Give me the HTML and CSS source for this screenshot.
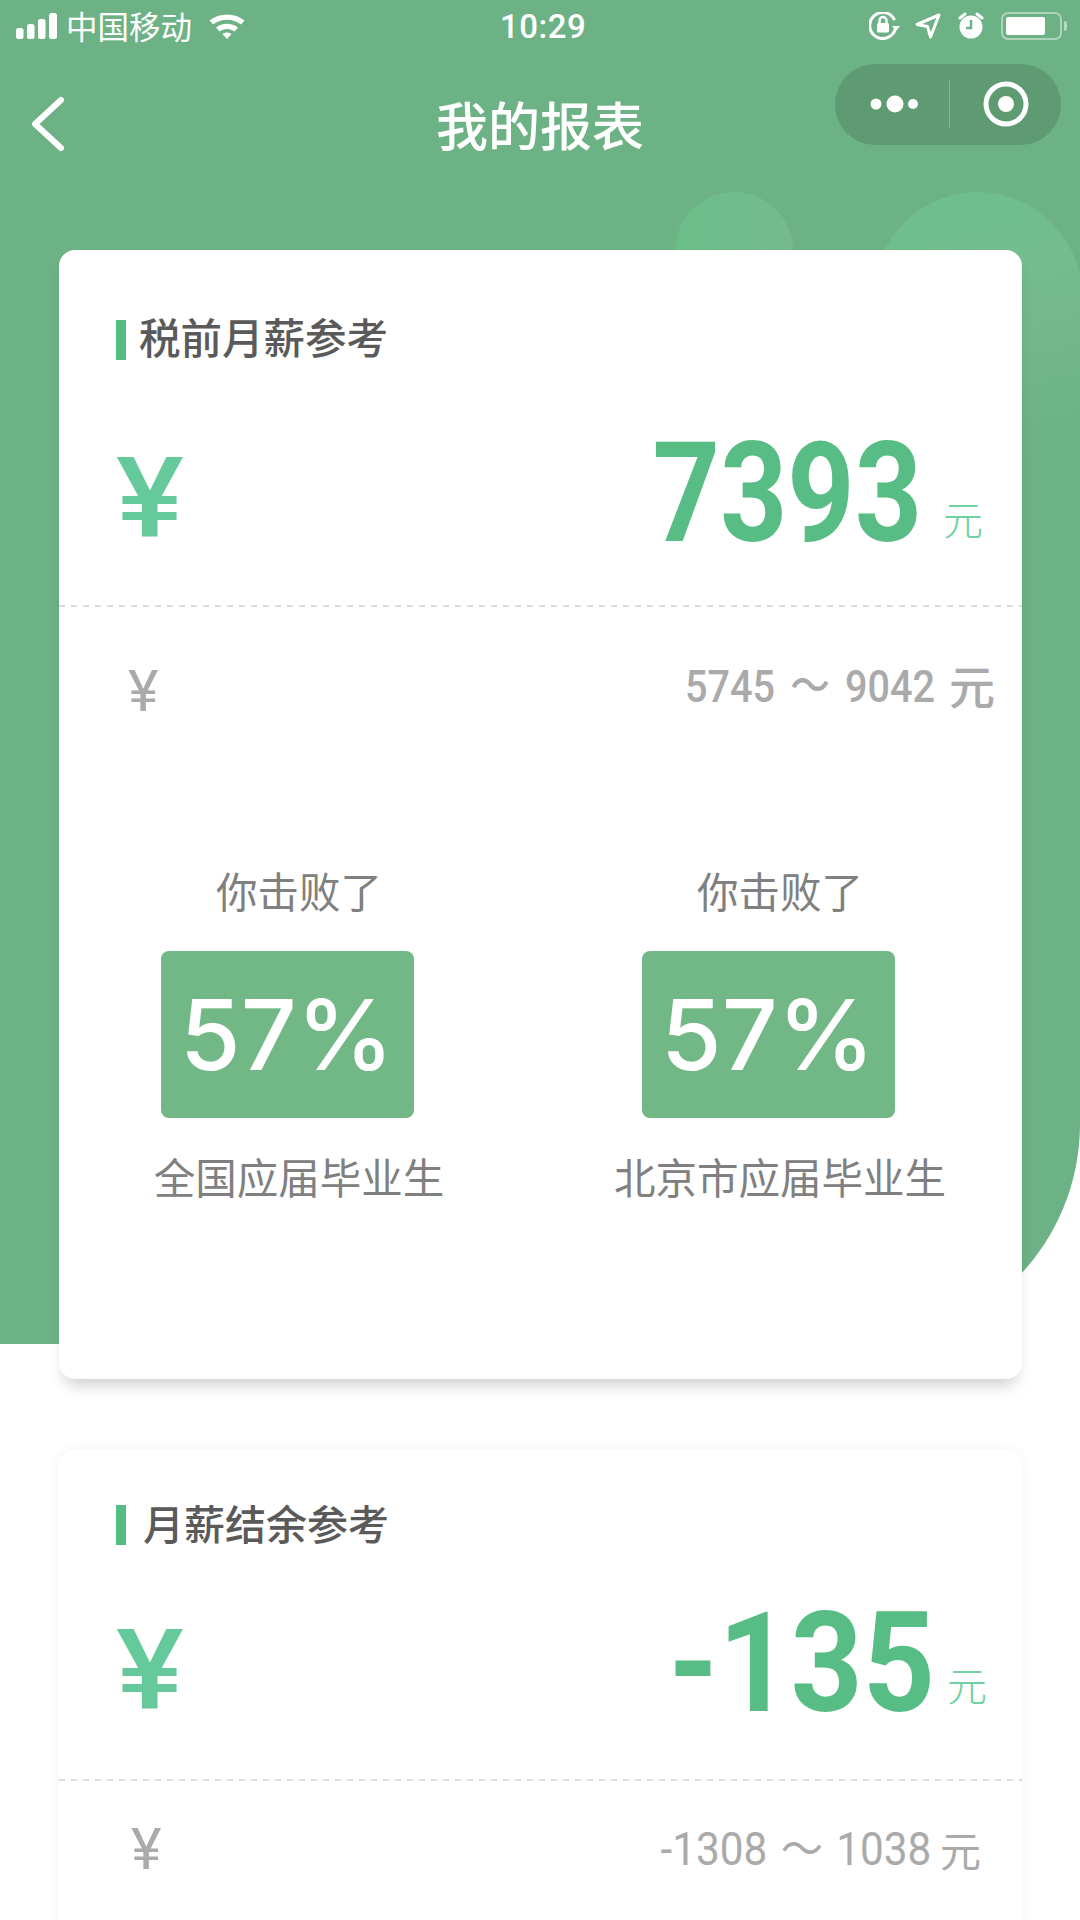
FILE: index.html
```html
<!DOCTYPE html>
<html lang="zh">
<head>
<meta charset="utf-8">
<title>我的报表</title>
<link rel="stylesheet" href="styles.css">
</head>
<body>
<div class="page">
  <div class="hero">
    <div class="blob blob-small"></div>
    <div class="blob blob-large"></div>
  </div>

  <header class="status">
    <div class="status-left">
      <svg class="signal" width="42" height="28" viewBox="0 0 42 28"><rect x="0" y="15" width="7.5" height="11" rx="2.5"/><rect x="11" y="11" width="7.5" height="15" rx="2.5"/><rect x="22" y="6" width="7.5" height="20" rx="2.5"/><rect x="33" y="0" width="8" height="26" rx="2.5"/></svg>
      <span class="carrier">中国移动</span>
      <svg class="wifi" width="38" height="28" viewBox="0 0 38 28"><path d="M1.5 8.5C11 .5 27 .5 36.5 8.5l-3.500 4C25 6 13 6 5 12.5Z"/><path d="M8 15.500c6.500-5 15.500-5 22 0l-3.500 4c-4.500-3.500-10.500-3.500-15 0Z"/><path d="M14.500 22c2.700-2 6.300-2 9 0L19 27Z"/></svg>
    </div>
    <div class="clock">10:29</div>
    <div class="status-right">
      <svg class="st-icon st-lock" width="32" height="28" viewBox="0 0 32 28"><path class="line" d="M26.500 16A13 13 0 1 1 25 7"/><path class="solid" d="M23 14h8l-4 5Z"/><rect class="solid" x="8" y="11" width="12" height="9.500" rx="1.500"/><path class="line thin" d="M10.500 11V8.500a3.500 3.500 0 0 1 7 0V11"/></svg>
      <svg class="st-icon" width="26" height="26" viewBox="0 0 26 26"><path class="line" d="M24 2 2 11.500l10.500 2 3 10.500Z" stroke-linejoin="round"/></svg>
      <svg class="st-icon" width="26" height="28" viewBox="0 0 26 28"><circle class="solid" cx="13" cy="15" r="11.500"/><path class="cut" d="M13 8v8H8"/><path class="line" d="M2 6l5-4M24 6l-5-4"/></svg>
      <div class="battery"><div class="battery-fill"></div></div>
      <div class="battery-nub"></div>
    </div>
  </header>

  <nav class="navbar">
    <svg class="back" width="36" height="60" viewBox="0 0 36 60"><path d="M32 6 6 30l26 24"/></svg>
    <h1 class="title">我的报表</h1>
    <div class="capsule">
      <svg class="capsule-dots" width="48" height="20" viewBox="0 0 48 20"><circle cx="6" cy="10" r="5.500"/><circle cx="25" cy="10" r="8.500"/><circle cx="43" cy="10" r="5"/></svg>
      <div class="capsule-rule"></div>
      <svg class="capsule-target" width="46" height="46" viewBox="0 0 46 46"><circle class="ring" cx="23" cy="23" r="20"/><circle cx="23" cy="23" r="8"/></svg>
    </div>
  </nav>

  <main class="cards">
    <section class="card card-first">
      <h2 class="section-title">税前月薪参考</h2>
      <div class="main-row">
        <span class="yen-big">¥</span>
        <div class="amount">
          <span class="amount-num">7393</span>
          <span class="amount-unit">元</span>
        </div>
      </div>
      <div class="dash"></div>
      <div class="range-row">
        <span class="yen-small">¥</span>
        <div class="range range-bold"><span class="range-num">5745 ～ 9042</span><span class="range-unit">元</span></div>
      </div>
      <div class="stats">
        <div class="stat">
          <div class="stat-text">你击败了</div>
          <div class="stat-box">57%</div>
          <div class="stat-text">全国应届毕业生</div>
        </div>
        <div class="stat">
          <div class="stat-text">你击败了</div>
          <div class="stat-box">57%</div>
          <div class="stat-text">北京市应届毕业生</div>
        </div>
      </div>
    </section>

    <section class="card card-second">
      <h2 class="section-title section-title-alt">月薪结余参考</h2>
      <div class="main-row main-row-alt">
        <span class="yen-big">¥</span>
        <div class="amount amount-alt">
          <span class="amount-num">-135</span>
          <span class="amount-unit">元</span>
        </div>
      </div>
      <div class="dash"></div>
      <div class="range-row range-row-alt">
        <span class="yen-small">¥</span>
        <div class="range range-light"><span class="range-num">-1308 ～ 1038</span><span class="range-unit">元</span></div>
      </div>
    </section>
  </main>
</div>
</body>
</html>
```
FILE: styles.css
```css
* { box-sizing: border-box; }
html, body { margin: 0; padding: 0; background: #fff; }
body { font-family: "Noto Sans CJK SC", "Noto Sans", sans-serif; }
.page { position: relative; width: 1080px; height: 1920px; overflow: hidden; background: #fff; }

.hero {
  position: absolute; left: 0; top: 0; width: 1080px; height: 1344px;
  background: #6cb284; border-bottom-right-radius: 220px; overflow: hidden;
}
.blob { position: absolute; }
.blob-small { left: 675px; top: 192px; width: 118px; height: 118px; border-radius: 50%; background: linear-gradient(90deg, #6bbe88, #76b98e); }
.blob-large { left: 874px; top: 192px; width: 208px; height: 300px; border-radius: 104px 104px 0 0; background: linear-gradient(165deg, #6bc08a 0%, #74bc8e 30%, #74b88c 48%, #6cb284 85%); }

.status, .navbar, .cards { position: relative; }

.status { display: flex; align-items: center; height: 52px; padding: 0 13px 0 16px; color: #fff; }
.status-left { display: flex; align-items: center; width: 484px; }
.signal, .wifi { fill: #fff; }
.signal { margin-top: 2px; }
.carrier { margin-left: 8px; font-size: 31.5px; line-height: 50px; margin-bottom: 2px; }
.wifi { margin-left: 16px; }
.clock { width: 87px; padding-top: 2px; font-family: "Roboto", sans-serif; font-size: 33px; font-weight: 500; line-height: 52px; letter-spacing: 0.5px; white-space: nowrap; }
.status-right { display: flex; align-items: center; margin-left: auto; }
.st-icon { margin-right: 17px; fill: none; }
.st-lock { margin-right: 14px; }
.st-icon .line { fill: none; stroke: #fff; stroke-width: 3; stroke-linecap: round; }
.st-icon .thin { stroke-width: 2.500; }
.st-icon .solid { fill: #fff; }
.st-icon .cut { fill: none; stroke: #6cb284; stroke-width: 2.500; }
.battery { width: 61px; height: 28px; padding: 3px; border: 2.500px solid rgba(255, 255, 255, 0.45); border-radius: 7px; }
.battery-fill { width: 39px; height: 18px; background: #fff; border-radius: 2px; }
.battery-nub { width: 3px; height: 10px; margin-left: 2px; background: rgba(255, 255, 255, 0.5); border-radius: 0 3px 3px 0; }

.navbar { display: flex; align-items: center; height: 104px; padding: 0 19px 0 29px; color: #fff; }
.back { fill: none; stroke: #fff; stroke-width: 6; stroke-linecap: round; stroke-linejoin: round; margin-top: 40px; }
.title { position: absolute; left: 0; right: 0; top: 45px; margin: 0; text-align: center; font-size: 52px; line-height: 54px; font-weight: 500; }
.capsule { display: flex; align-items: center; width: 226px; height: 81px; margin-left: auto; margin-top: 0; background: #5f9b72; border-radius: 41px; padding-left: 35px; }
.capsule-dots { fill: #fff; }
.capsule-rule { width: 1px; height: 48px; margin-left: 31px; background: rgba(255, 255, 255, 0.25); }
.capsule-target { margin-left: 33px; fill: #fff; }
.capsule-target .ring { fill: none; stroke: #fff; stroke-width: 5; }

.cards { display: flex; flex-direction: column; gap: 71px; padding: 94px 58px 0 59px; }
.card { background: #fff; border-radius: 16px; position: relative; }
.card-first { height: 1129px; box-shadow: 0 12px 16px -6px rgba(0, 0, 0, 0.2); }
.card-second { height: 600px; box-shadow: 0 0 14px rgba(0, 0, 0, 0.05); }

.section-title {
  display: flex; align-items: center; margin: 0; padding: 63px 0 0 57px;
  height: 109px; font-size: 41.500px; line-height: 46px; font-weight: 500; color: #5a5a5a;
}
.section-title::before { content: ""; width: 10px; height: 40px; background: #55bd83; margin-right: 13px; margin-top: 8px; }
.section-title-alt { padding-top: 49px; height: 95px; font-size: 41px; }
.section-title-alt::before { margin-right: 17px; margin-top: 5px; }

.main-row { display: flex; justify-content: space-between; align-items: flex-start; height: 246px; padding: 0 39px 0 57px; }
.main-row-alt { height: 234px; }
.yen-big { font-family: "Roboto", sans-serif; font-size: 112px; font-weight: 500; line-height: 130px; color: #66c99b; margin-top: 74px; transform: scaleX(1.14); transform-origin: left; }
.main-row-alt .yen-big { margin-top: 60px; }
.amount { display: flex; align-items: flex-end; margin-top: 49px; }
.amount-alt { margin-top: 33px; margin-right: -4px; }
.amount-num { font-family: "Roboto", sans-serif; font-weight: 700; font-size: 140px; line-height: 170px; color: #57bd84; transform: scaleX(0.84); transform-origin: right; }
.amount-alt .amount-num { transform: scaleX(0.9); }
.amount-unit { font-size: 40px; line-height: 50px; color: #6fd0a0; margin-left: 21px; margin-bottom: 35px; font-weight: 300; }
.amount-alt .amount-unit { margin-left: 12px; margin-bottom: 39px; }

.dash { height: 2px; background-image: repeating-linear-gradient(90deg, #dcdcdc 0 6px, transparent 6px 12px); }

.range-row { display: flex; justify-content: space-between; align-items: flex-start; height: 90px; padding: 0 27px 0 69px; }
.range-row-alt { padding: 0 41px 0 72px; }
.yen-small { font-family: "Roboto", sans-serif; font-size: 58px; line-height: 60px; color: #aaa; margin-top: 54px; }
.range-row-alt .yen-small { margin-top: 38px; }
.range { display: flex; align-items: center; color: #aaa; margin-top: 50px; white-space: nowrap; }
.range-row-alt .range { margin-top: 41px; }
.range-num { font-family: "Roboto", "Noto Sans CJK SC", sans-serif; font-size: 45px; line-height: 54px; font-weight: 500; word-spacing: 6px; }
.range-bold .range-num { transform: scaleX(0.88); transform-origin: right; }
.range-unit { font-size: 46px; line-height: 54px; margin-left: 14px; margin-bottom: 6px; font-weight: 500; }
.range-light .range-num { font-size: 46px; font-weight: 400; word-spacing: 3px; transform: scaleX(0.92); transform-origin: right; }
.range-light .range-unit { font-weight: 400; font-size: 41px; margin-left: 9px; margin-bottom: 0; }

.stats { display: grid; grid-template-columns: 481px 481px; margin-top: 168px; }
.stat { display: flex; flex-direction: column; align-items: center; width: 480px; }
.stat-text { font-size: 41.500px; line-height: 50px; color: #808080; white-space: nowrap; }
.stat-box {
  width: 253px; height: 167px; margin: 36px 24px 33px 0; border-radius: 8px; background: #72b886;
  display: flex; align-items: center; justify-content: center; color: #fff;
  font-family: "Inter", sans-serif; font-size: 98px; font-weight: 500;
}
```
